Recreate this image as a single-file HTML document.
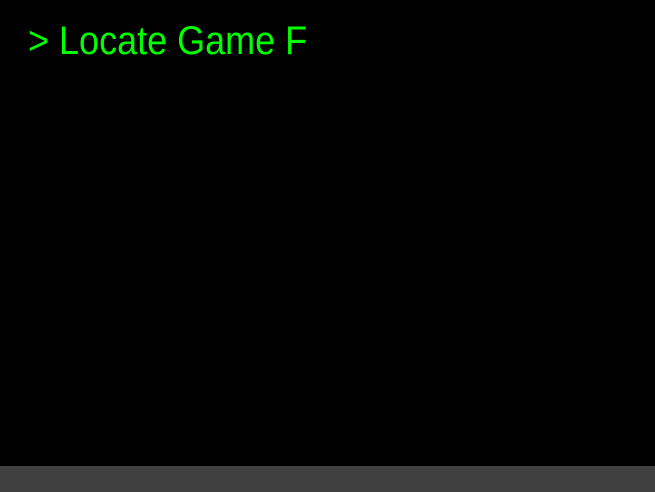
<!DOCTYPE html>
<html><head><style>
html,body{margin:0;padding:0;background:#000;width:655px;height:492px;overflow:hidden;position:relative}
.t{position:absolute;left:28px;top:17px;font-family:"Liberation Sans",sans-serif;font-size:40px;line-height:48px;color:#00ff00;white-space:pre;transform:scaleX(0.9);transform-origin:0 0}
.bar{position:absolute;left:0;top:466px;width:655px;height:26px;background:#404040}
</style></head><body>
<div class="t">&gt; Locate Game F</div>
<div class="bar"></div>
</body></html>
